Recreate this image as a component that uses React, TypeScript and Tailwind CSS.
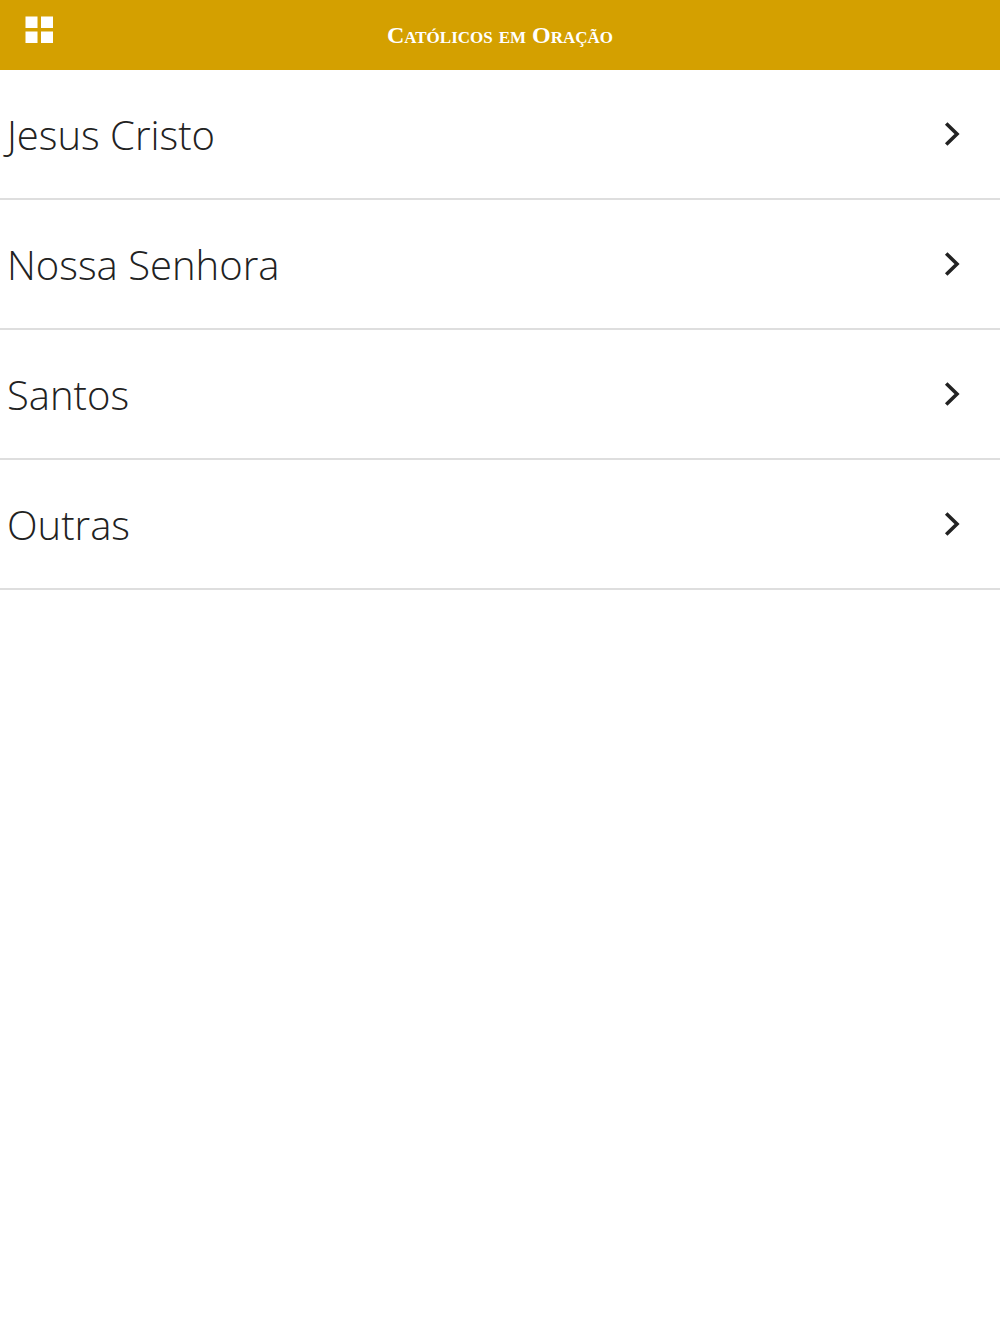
const categories = [
  { id: "jesus-cristo", name: "Jesus Cristo" },
  { id: "nossa-senhora", name: "Nossa Senhora" },
  { id: "santos", name: "Santos" },
  { id: "outras", name: "Outras" },
];

const GridIcon = () => (
  <svg viewBox="0 0 28 28" className="w-7 h-7" fill="currentColor" aria-hidden="true">
    <path d="M.5.5h12v11.5H.5zM16 .5h12v11.5H16zM.5 15.5h12V27H.5zM16 15.5h12V27H16z" />
  </svg>
);

const ChevronIcon = () => (
  <svg viewBox="0 0 16 24" className="w-4 h-6" fill="none" stroke="currentColor" strokeWidth="3.6" aria-hidden="true">
    <path d="M2.2 1.5 13 12 2.2 22.5" />
  </svg>
);

const App: React.FC = () => {
  return (
    <div className="min-h-screen bg-white font-['Open_Sans',sans-serif]">
      <header className="grid grid-cols-[1fr_auto_1fr] h-[70px] bg-[#d4a000] text-white">
        <button type="button" aria-label="Menu" className="justify-self-start self-start pl-[25px] pt-4">
          <GridIcon />
        </button>
        <h1 className="self-center font-['Liberation_Serif',serif] text-2xl font-bold [font-variant-caps:small-caps]">
          Católicos em Oração
        </h1>
      </header>

      {/* Categories */}
      <nav>
        <ul>
          {categories.map((category) => (
            <li key={category.id} className="border-b-2 border-[#dedede]">
              <a
                href={`#${category.id}`}
                className="flex items-center justify-between h-32 pl-[7px] pr-10 text-[40px] font-light text-[#222]"
              >
                <span className="pt-0.5">{category.name}</span>
                <ChevronIcon />
              </a>
            </li>
          ))}
        </ul>
      </nav>
    </div>
  );
};

export default App;
